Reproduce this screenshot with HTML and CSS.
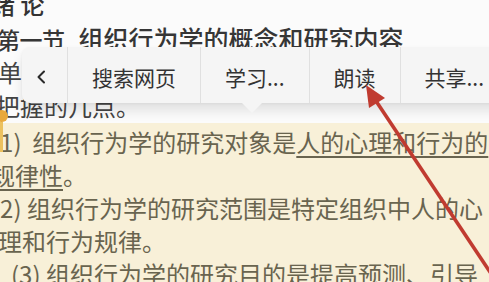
FILE: index.html
```html
<!DOCTYPE html>
<html lang="zh-CN">
<head>
<meta charset="utf-8">
<title>组织行为学</title>
<link rel="stylesheet" href="styles.css">
</head>
<body>
<div class="page">
  <section class="top">
    <p class="line title">绪 论</p>
    <p class="line heading"><span class="sec">第一节</span><span class="ttl">组织行为学的概念和研究内容</span></p>
    <p class="line plain in-dan">单</p>
    <p class="line plain in-ba">把握的几点。</p>
  </section>
  <section class="body">
    <p class="line in-1">(1)&nbsp;&nbsp;组织行为学的研究对象是<span class="ul">人的心理和行为的</span></p>
    <p class="line in-2"><span class="ul">规律性</span>。</p>
    <p class="line in-3">(2) 组织行为学的研究范围是特定组织中人的心</p>
    <p class="line in-4">理和行为规律。</p>
    <p class="line in-5">(3) 组织行为学的研究目的是提高预测、引导</p>
  </section>

  <div class="handle"><span class="knob"></span><span class="bar"></span></div>

  <nav class="menu">
    <div class="cell back">
      <svg width="10" height="14" viewBox="0 0 10 14"><path d="M8 1.5 L2.5 7 L8 12.5" fill="none" stroke="#2a2a2a" stroke-width="2" stroke-linecap="round" stroke-linejoin="round"/></svg>
    </div>
    <div class="cell">搜索网页</div>
    <div class="cell">学习...</div>
    <div class="cell">朗读</div>
    <div class="cell">共享...</div>
    <span class="tip"></span>
  </nav>

  <svg class="arrow" width="489" height="282" viewBox="0 0 489 282">
    <line x1="372" y1="95" x2="502" y2="290" stroke="#c03b30" stroke-width="3.6"/>
    <polygon points="366,85 385,98 369,108" fill="#c03b30"/>
  </svg>
</div>
</body>
</html>
```

FILE: styles.css
```css
html, body {
  margin: 0;
  padding: 0;
}

body {
  font-family: "Noto Sans CJK SC", "Noto Sans", sans-serif;
  background: #f8f0d8;
}

.page {
  position: relative;
  width: 489px;
  height: 282px;
  overflow: hidden;
  background: #f8f0d8;
}

.line {
  margin: 0;
  height: 34px;
  line-height: 34px;
  font-size: 24px;
  white-space: nowrap;
}

.top {
  margin-top: -13px;
  background: #fbfbfb;
  color: #3c3c3c;
}

.title {
  text-indent: -9px;
  font-weight: 500;
  color: #333;
}

.heading {
  text-indent: -3px;
  color: #363636;
  font-weight: 500;
}

.heading .sec {
  font-size: 23px;
  letter-spacing: -0.5px;
}

.heading .ttl {
  display: inline-block;
  margin-left: 14px;
  text-indent: 0;
  font-size: 25px;
}

.plain {
  color: #444;
}

.in-dan { text-indent: -2px; }
.in-ba { text-indent: -4px; }

.body {
  padding-top: 2px;
  color: #69644f;
}

.body .line {
  height: 33px;
  line-height: 33px;
}

.in-1 { text-indent: -8px; }
.in-2 { text-indent: -9px; }
.in-3 { text-indent: -8px; }
.in-4 { text-indent: -2px; }
.in-5 { text-indent: 11px; }

.ul {
  text-decoration: underline;
  text-decoration-thickness: 1.5px;
  text-underline-offset: 4px;
}

.handle {
  position: absolute;
  left: -4px;
  top: 110px;
  width: 12px;
}

.knob {
  display: block;
  width: 12px;
  height: 12px;
  border-radius: 50%;
  background: #e8a93c;
}

.bar {
  display: block;
  width: 3px;
  height: 30px;
  margin-left: 4px;
  background: #ecc15e;
}

.menu {
  position: absolute;
  left: 22px;
  top: 47px;
  height: 56px;
  display: flex;
  align-items: stretch;
  background: #f5f5f5;
  border-radius: 8px 0 0 8px;
  box-shadow: 0 8px 12px rgba(0, 0, 0, 0.10), 0 1px 3px rgba(0, 0, 0, 0.05);
}

.cell {
  display: flex;
  align-items: center;
  justify-content: center;
  padding: 3px 24px 0;
  font-size: 21px;
  color: #333;
  white-space: nowrap;
  border-left: 1px solid #e0e0e0;
}

.cell.back {
  width: 45px;
  padding: 4px 0 0;
  box-sizing: border-box;
  border-left: none;
  justify-content: flex-start;
  padding-left: 14px;
}

.tip {
  position: absolute;
  left: 220px;
  top: 56px;
  width: 0;
  height: 0;
  border-left: 10px solid transparent;
  border-right: 10px solid transparent;
  border-top: 10px solid #f5f5f5;
}

.arrow {
  position: absolute;
  left: 0;
  top: 0;
  pointer-events: none;
}
```
